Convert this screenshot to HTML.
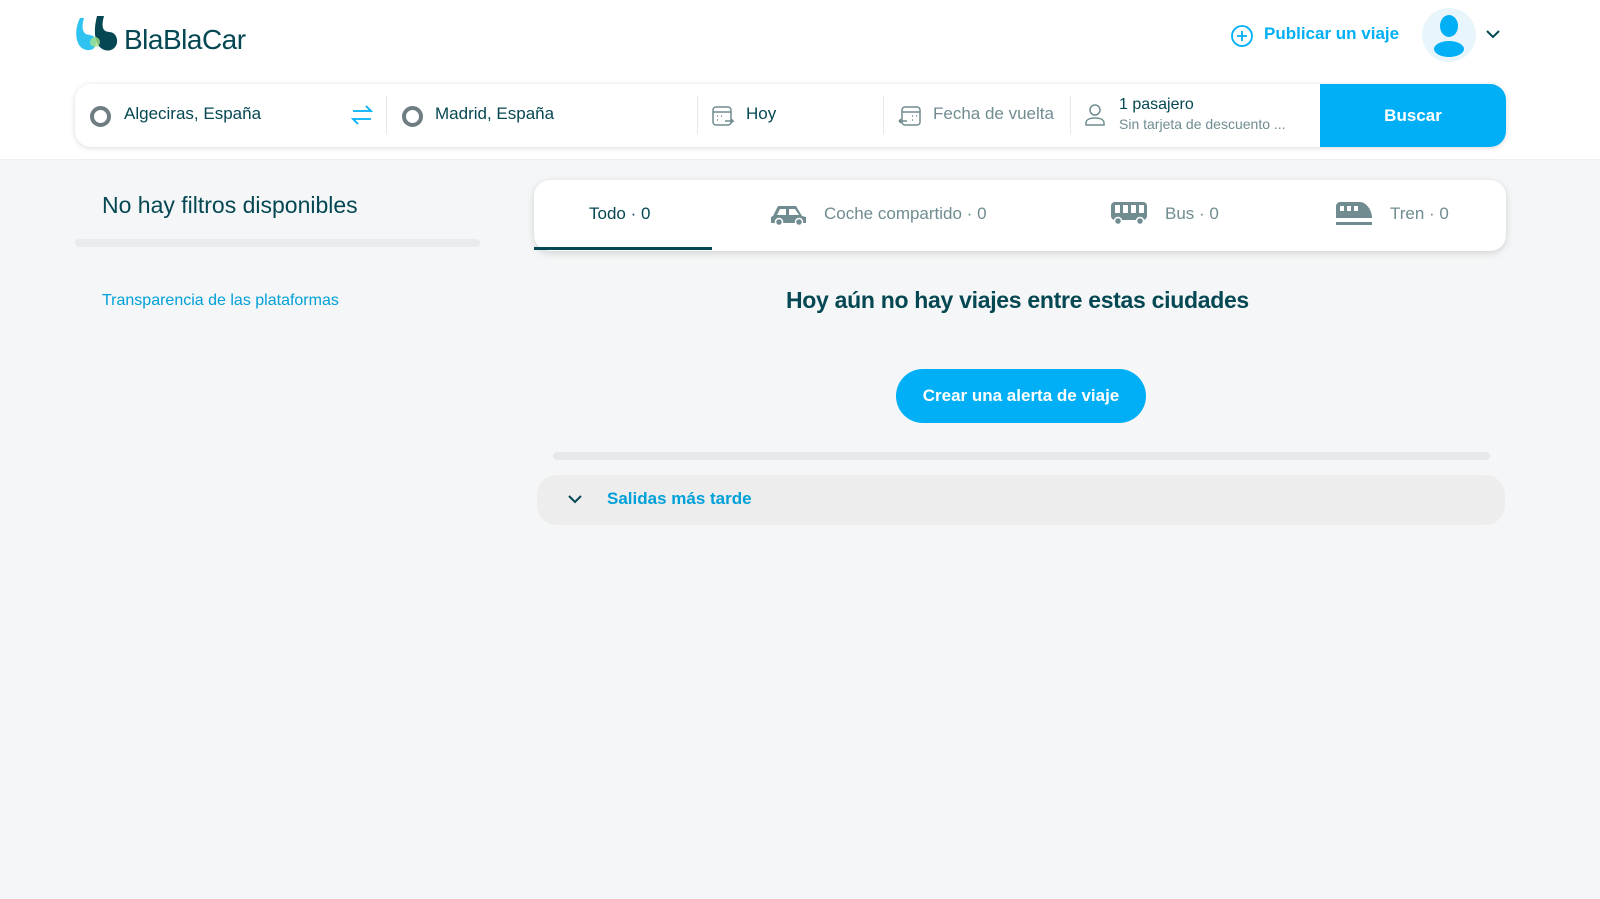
<!DOCTYPE html>
<html><head><meta charset="utf-8"><style>
*{box-sizing:border-box;margin:0;padding:0}
body{width:1600px;height:899px;background:#f4f6f7;font-family:"Liberation Sans",sans-serif;color:#054752;position:relative;overflow:hidden}
.hdr{position:absolute;left:0;top:0;width:1600px;height:160px;background:#fff;border-bottom:1px solid #eceeef}
.abs{position:absolute}
.sb{position:absolute;left:75px;top:84px;width:1431px;height:63px;background:#fff;border-radius:16px;box-shadow:0 1px 6px rgba(0,0,0,.15)}
.txt{position:absolute;font-size:17px;white-space:nowrap}
.sep{position:absolute;top:12px;width:1px;height:38px;background:#e6e9ea}
.tabs{position:absolute;left:534px;top:180px;width:972px;height:71px;background:#fff;border-radius:16px;box-shadow:0 2px 8px rgba(0,0,0,.15)}
.tab{position:absolute;top:24px;font-size:17px;color:#708c91;white-space:nowrap}
</style></head><body>
<div class="hdr"></div>
<svg class="abs" style="left:75px;top:16px" width="45" height="38" viewBox="0 0 45 38"><path d="M5 2 C2 8 0 16 2 24 C4 33 12 36 18 33 C22 30 22 22 18 20 C14 18 10 20 8 14 C7 10 8 6 9 2 Z" fill="#2ec3f0"/><path d="M22 0 C20 8 19 16 21 24 C23 33 32 37 38 33 C44 29 43 20 38 17 C34 15 30 17 28 12 C27 8 28 4 29 0 Z" fill="#054752"/><circle cx="20" cy="26" r="5" fill="#a8e28a" opacity=".8"/></svg>
<div class="txt" style="left:124px;top:24px;font-size:28px;color:#054752;letter-spacing:-0.5px">BlaBlaCar</div>
<svg class="abs" style="left:1230px;top:24px" width="24" height="24" viewBox="0 0 24 24" fill="none" stroke="#00aff5" stroke-width="1.8"><circle cx="12" cy="12" r="10"/><path d="M12 7v10M7 12h10"/></svg>
<div class="txt" style="left:1264px;top:24px;color:#00aff5;font-weight:bold;font-size:17px">Publicar un viaje</div>
<div class="abs" style="left:1422px;top:8px;width:54px;height:54px;border-radius:50%;background:#e8f6fc"></div>
<svg class="abs" style="left:1429px;top:13px" width="40" height="44" viewBox="0 0 40 44"><ellipse cx="20" cy="13" rx="9" ry="11" fill="#00aff5"/><ellipse cx="20" cy="36" rx="15" ry="8" fill="#00aff5"/></svg>
<svg class="abs" style="left:1485px;top:28px" width="16" height="12" viewBox="0 0 16 12" fill="none" stroke="#054752" stroke-width="2"><path d="M2 3l6 6 6-6"/></svg>

<div class="sb">
 <div class="abs" style="left:15px;top:22px;width:21px;height:21px;border-radius:50%;border:4px solid #6f7c80"></div>
 <div class="txt" style="left:49px;top:20px">Algeciras, España</div>
 <svg class="abs" style="left:275px;top:20px" width="24" height="22" viewBox="0 0 24 22" fill="none" stroke="#00aff5" stroke-width="1.8"><path d="M3 7h18l-5-5M21 15H3l5 5"/></svg>
 <div class="sep" style="left:311px"></div>
 <div class="abs" style="left:327px;top:22px;width:21px;height:21px;border-radius:50%;border:4px solid #6f7c80"></div>
 <div class="txt" style="left:360px;top:20px">Madrid, España</div>
 <div class="sep" style="left:622px"></div>
 <svg class="abs" style="left:636px;top:20px" width="24" height="24" viewBox="0 0 24 24" fill="none" stroke="#708c91" stroke-width="1.5"><rect x="2" y="3" width="18" height="18" rx="3"/><path d="M2 8h18M6 12h1M10 12h1M6 16h1M14 17h8l-2-2M22 17l-2 2"/></svg>
 <div class="txt" style="left:671px;top:20px">Hoy</div>
 <div class="sep" style="left:808px"></div>
 <svg class="abs" style="left:823px;top:20px" width="24" height="24" viewBox="0 0 24 24" fill="none" stroke="#708c91" stroke-width="1.5"><rect x="4" y="3" width="18" height="18" rx="3"/><path d="M4 8h18M14 12h1M18 12h1M14 16h1M1 17h8M1 17l2-2M1 17l2 2"/></svg>
 <div class="txt" style="left:858px;top:20px;color:#708c91">Fecha de vuelta</div>
 <div class="sep" style="left:995px"></div>
 <svg class="abs" style="left:1009px;top:19px" width="22" height="24" viewBox="0 0 22 24" fill="none" stroke="#708c91" stroke-width="1.5"><circle cx="11" cy="7" r="5"/><path d="M2 22v-2c0-3 3-5 9-5s9 2 9 5v2z"/></svg>
 <div class="txt" style="left:1044px;top:12px;font-size:16px">1 pasajero</div>
 <div class="txt" style="left:1044px;top:32px;font-size:14px;color:#708c91">Sin tarjeta de descuento ...</div>
 <div class="abs" style="left:1245px;top:0;width:186px;height:63px;background:#00aff5;border-radius:0 16px 16px 0;color:#fff;font-weight:bold;font-size:17px;text-align:center;line-height:63px">Buscar</div>
</div>

<div class="txt" style="left:102px;top:192px;font-size:23px">No hay filtros disponibles</div>
<div class="abs" style="left:75px;top:239px;width:405px;height:8px;border-radius:4px;background:#e9ecee"></div>
<div class="txt" style="left:102px;top:292px;font-size:16px;color:#00a0d8">Transparencia de las plataformas</div>

<div class="tabs">
 <div class="tab" style="left:55px;color:#054752">Todo · 0</div>
 <div class="abs" style="left:0;top:67px;width:178px;height:3px;background:#054752"></div>
 <svg class="abs" style="left:235px;top:22px" width="40" height="24" viewBox="0 0 40 24"><path d="M4 14l5-10h18l6 10 4 1v6H2v-6z" fill="#708c91"/><path d="M11 7h6v6H8zM20 7h6l4 6H20z" fill="#fff"/><circle cx="10" cy="20" r="3.5" fill="#708c91" stroke="#fff" stroke-width="1.5"/><circle cx="30" cy="20" r="3.5" fill="#708c91" stroke="#fff" stroke-width="1.5"/></svg>
 <div class="tab" style="left:290px">Coche compartido · 0</div>
 <svg class="abs" style="left:575px;top:20px" width="40" height="26" viewBox="0 0 40 26"><rect x="2" y="2" width="36" height="18" rx="4" fill="#708c91"/><path d="M6 5h5v8H6zM14 5h5v8h-5zM22 5h5v8h-5zM30 5h5v8h-5z" fill="#fff"/><circle cx="9" cy="21" r="3.5" fill="#708c91" stroke="#fff" stroke-width="1.5"/><circle cx="31" cy="21" r="3.5" fill="#708c91" stroke="#fff" stroke-width="1.5"/></svg>
 <div class="tab" style="left:631px">Bus · 0</div>
 <svg class="abs" style="left:800px;top:20px" width="40" height="26" viewBox="0 0 40 26"><path d="M2 18V6c0-2 2-4 4-4h20c6 0 12 8 12 16z" fill="#708c91"/><path d="M6 6h4v5H6zM13 6h4v5h-4zM20 6h4v5h-4z" fill="#fff"/><rect x="2" y="22" width="36" height="3" fill="#708c91"/></svg>
 <div class="tab" style="left:856px">Tren · 0</div>
</div>

<div class="txt" style="left:786px;top:287px;font-size:23px;font-weight:bold;letter-spacing:-0.3px">Hoy aún no hay viajes entre estas ciudades</div>
<div class="abs" style="left:896px;top:369px;width:250px;height:54px;border-radius:27px;background:#00aff5;color:#fff;font-weight:bold;font-size:17px;text-align:center;line-height:54px">Crear una alerta de viaje</div>
<div class="abs" style="left:553px;top:452px;width:937px;height:8px;border-radius:4px;background:#e6e9ea"></div>
<div class="abs" style="left:537px;top:475px;width:968px;height:50px;border-radius:20px;background:#ededed"></div>
<svg class="abs" style="left:566px;top:492px" width="18" height="14" viewBox="0 0 18 14" fill="none" stroke="#054752" stroke-width="2"><path d="M3 4l6 6 6-6"/></svg>
<div class="txt" style="left:607px;top:489px;font-size:17px;font-weight:bold;color:#00a0d8">Salidas más tarde</div>
</body></html>
